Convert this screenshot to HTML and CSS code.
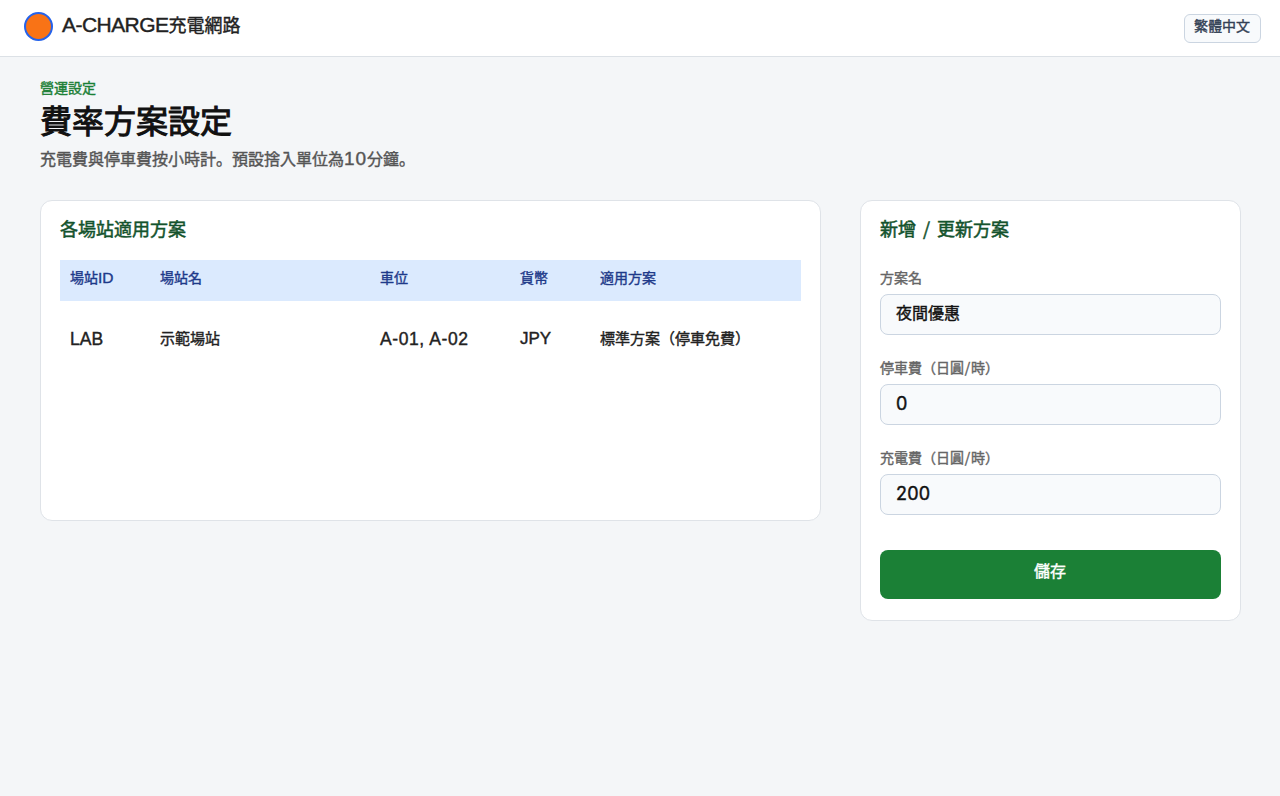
FILE: index.html
```html
<!DOCTYPE html>
<html lang="ja">
<head>
<meta charset="utf-8">
<title>費率方案設定</title>
<link rel="stylesheet" href="styles.css">
</head>
<body>
<header class="topbar">
  <div class="brand"><span class="logo"></span><span class="brand-name"><span class="latin brand-latin">A-CHARGE</span>充電網路</span></div>
  <button class="lang" type="button">繁體中文</button>
</header>
<main class="page">
  <div class="eyebrow">營運設定</div>
  <h1 class="title">費率方案設定</h1>
  <p class="subtitle">充電費與停車費按小時計。預設捨入單位為<span class="latin sub-num">10</span>分鐘。</p>
  <div class="columns">
    <section class="card plans">
      <h2 class="card-title">各場站適用方案</h2>
      <div class="row head"><span>場站<span class="latin head-latin">ID</span></span><span>場站名</span><span>車位</span><span>貨幣</span><span>適用方案</span></div>
      <div class="row data"><span class="latin cell-lab">LAB</span><span>示範場站</span><span class="latin cell-bays">A-01, A-02</span><span class="latin cell-cur">JPY</span><span>標準方案（停車免費）</span></div>
    </section>
    <section class="card form">
      <h2 class="card-title">新增<span class="slash">/</span>更新方案</h2>
      <div class="field"><div class="label">方案名</div><div class="input">夜間優惠</div></div>
      <div class="field"><div class="label">停車費（日圓<span class="per">/</span>時）</div><div class="input number">0</div></div>
      <div class="field"><div class="label">充電費（日圓<span class="per">/</span>時）</div><div class="input number">200</div></div>
      <button class="save" type="button">儲存</button>
    </section>
  </div>
</main>
</body>
</html>
```
FILE: styles.css
```css
* { box-sizing: border-box; }
body {
  margin: 0;
  min-height: 796px;
  background: #f4f6f8;
  color: #222;
  font-family: "Noto Sans CJK JP", sans-serif;
  -webkit-text-stroke: 0.4px currentColor;
}
button { font-family: inherit; -webkit-text-stroke: inherit; }
.latin { font-family: "Liberation Sans", sans-serif; line-height: 0; }
.topbar {
  height: 57px;
  padding: 0 19px 0 24px;
  background: #fff;
  border-bottom: 1px solid #dce1e6;
  display: flex;
  justify-content: space-between;
  align-items: flex-start;
}
.brand { display: flex; gap: 9px; padding-top: 12px; }
.logo { width: 29px; height: 29px; border: 2px solid #2563eb; border-radius: 50%; background: #f97316; }
.brand-name { font-size: 18px; line-height: 24px; white-space: nowrap; }
.brand-latin { font-size: 21px; letter-spacing: -0.55px; }
.lang {
  width: 77px;
  height: 29px;
  margin-top: 14px;
  padding: 0 1px 6px 0;
  border: 1px solid #cbd5e1;
  border-radius: 6px;
  background: #f8fafc;
  color: #334155;
  font-size: 14px;
  line-height: 21px;
}
.page { padding: 20px 39px 0 40px; }
.eyebrow { color: #1b8036; font-size: 14px; line-height: 20px; }
.title { margin: 0; color: #111; font-size: 32px; line-height: 44px; font-weight: 400; -webkit-text-stroke-width: 1px; }
.subtitle { margin: 5px 0 0; color: #555; font-size: 16px; line-height: 24px; }
.sub-num { font-size: 19px; letter-spacing: 0.9px; }
.columns { display: flex; justify-content: space-between; align-items: flex-start; margin-top: 30px; }
.card { background: #fff; border: 1px solid #dfe3e8; border-radius: 12px; padding: 14px 19px 0; }
.plans { width: 781px; height: 321px; }
.form { width: 381px; height: 421px; }
.card-title { margin: 0; color: #14532d; font-size: 18px; line-height: 26px; font-weight: 400; -webkit-text-stroke-width: 0.5px; }
.slash { display: inline-block; width: 21px; text-align: center; }
.row { display: grid; grid-template-columns: 90px 220px 140px 80px 1fr; padding-left: 10px; white-space: nowrap; }
.head { height: 41px; margin-top: 19px; background: #dbeafe; color: #1e3a8a; font-size: 14px; line-height: 34px; }
.head-latin { font-size: 15.5px; }
.data { margin-top: 25px; font-size: 15px; line-height: 24px; }
.data .latin { line-height: 26px; }
.cell-lab { font-size: 17.5px; }
.cell-bays { font-size: 17.5px; letter-spacing: 0.6px; }
.data .cell-cur { font-size: 17px; line-height: 26px; }
.field { margin-top: 22px; }
.card-title + .field { margin-top: 26px; }
.label { color: #666; font-size: 14px; line-height: 20px; }
.per { display: inline-block; width: 7px; text-align: center; }
.input {
  height: 41px;
  margin-top: 7px;
  padding-left: 15px;
  border: 1px solid #cbd5e1;
  border-radius: 8px;
  background: #f8fafc;
  color: #111;
  font-size: 16px;
  line-height: 35px;
}
.number { font-family: Inter, sans-serif; font-size: 18px; letter-spacing: 0.25px; line-height: 37px; }
.save {
  display: block;
  width: 341px;
  height: 49px;
  margin-top: 35px;
  padding: 0 1px 9px 0;
  border: 0;
  border-radius: 8px;
  background: #1b8036;
  color: #fff;
  font-size: 16px;
  line-height: 40px;
}
```
